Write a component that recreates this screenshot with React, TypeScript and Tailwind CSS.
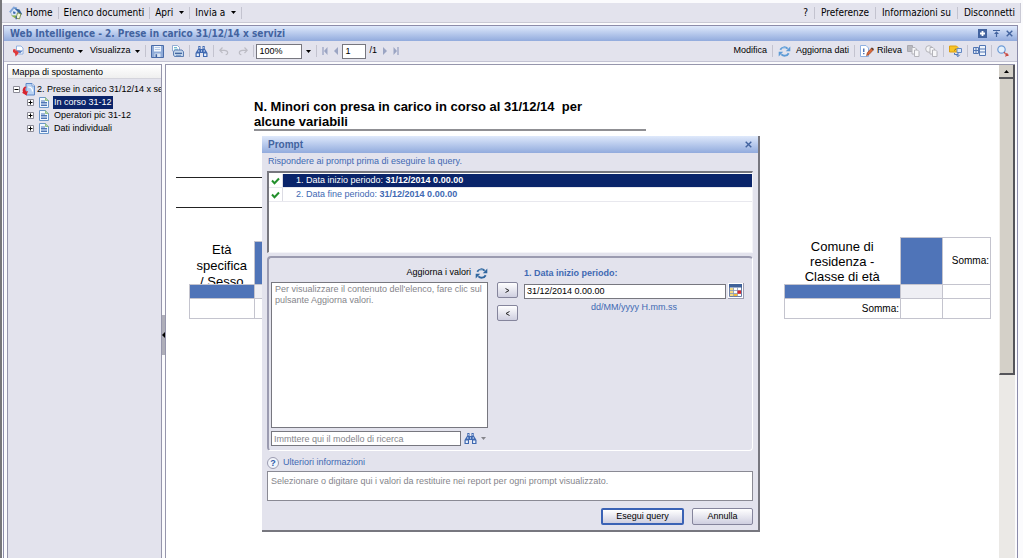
import React from 'react';
import clsx from 'clsx';

type IconProps = { className?: string };

const Separator = () => <span className="h-3 w-px shrink-0 bg-[#c3c3cf]" />;

const Caret = ({ className }: IconProps) => (
  <svg viewBox="0 0 5 3" className={clsx('h-[3px] w-[5px] shrink-0', className)} aria-hidden="true">
    <path d="M0 0h5L2.5 3z" fill="currentColor" />
  </svg>
);

const HomeIcon = () => (
  <svg viewBox="0 0 14 14" className="size-3.5 shrink-0" aria-hidden="true">
    <path d="M1.5 6 5 2l4 2v6.500L3 9.500z" fill="#dfe9f7" stroke="#9db3d3" strokeWidth=".7" />
    <path d="M.8 6.4 4.800 1.500l3.200.8" fill="none" stroke="#7fa5da" strokeWidth="1.8" />
    <path d="M5 2.2 10.5 3.600l2.700 4.700-2 .2L8 5z" fill="#35659f" />
    <path d="m4.2 5.3 2.400.6-.4 2L4 7.400z" fill="#3d6cb4" />
    <path d="m8.500 6.800 3.500 1-1.500 5L7 12.200z" fill="#f1f6dd" stroke="#54701f" strokeWidth=".7" />
    <path d="m2 9.500 4.500 3 1-3z" fill="#8fb94a" />
    <path d="M7.2 10.2v3" stroke="#385ca0" strokeWidth="1.2" />
  </svg>
);

const DocIcon = () => (
  <svg viewBox="0 0 12 12" className="size-3 shrink-0" aria-hidden="true">
    <path d="M4.500 1H9l2 2v6H4.500z" fill="#fff" stroke="#7fa3dc" strokeWidth=".8" />
    <path d="M1 4.500 3.500 4v1.500h4.300L6 9l-2.500 2.500L3 8.600 1 7z" fill="#e0393b" />
    <path d="M4.500 5.500H11L8 8.500z" fill="#5b83c8" />
  </svg>
);

const SaveIcon = () => (
  <svg viewBox="0 0 13 13" className="size-[13px]" aria-hidden="true">
    <path d="M.5.5h12v12H.5z" fill="#8fabd8" stroke="#4a6ca8" />
    <path d="M3 1h7v5.500H3z" fill="#f2f7fd" />
    <path d="M3.800 2.500h5.400M3.800 4.500h5.400" stroke="#a4bce0" strokeWidth=".8" />
    <path d="M3.500 8.500h6V12h-6z" fill="#dbe5f3" />
    <path d="M4.500 9.200h1.600V12H4.500z" fill="#3d609f" />
  </svg>
);

const PrintIcon = () => (
  <svg viewBox="0 0 13 13" className="size-[13px]" aria-hidden="true">
    <path d="M1.500.500h5L8.500 2.500V6h-7z" fill="#fff" stroke="#7b9ac9" strokeWidth=".8" />
    <path d="M3 2.500h3M3 4.200h4" stroke="#5fb3c9" strokeWidth=".9" />
    <path d="M2.500 6.500 4.500 5h6.500l1.500 1.800v4.700h-9l-1-1.500z" fill="#c3d6ec" stroke="#4e73ac" strokeWidth=".9" />
    <path d="M4 8.300h7" stroke="#355b98" strokeWidth="1.200" />
    <path d="M5 10.300h5" stroke="#6f92c2" />
  </svg>
);

const BinocularsIcon = () => (
  <svg viewBox="0 0 13 13" className="size-[13px]" aria-hidden="true">
    <path d="M3.300 1h2.200v3h2V1h2.200v2.500L12.500 8v4H8V8H5v4H.500V8l2.800-4.500z" fill="#3f68b0" />
    <path d="M1.700 8.500h2.200v2.400H1.700zM9.100 8.500h2.200v2.400H9.100z" fill="#eaf2fc" />
    <path d="M4.400 2v1.500M8.600 2v1.500M3.800 5v2M9.200 5v2" stroke="#c3d5f0" strokeWidth=".9" />
    <path d="M6 5.300h1v1.400H6z" fill="#c3d5f0" />
  </svg>
);

const UndoIcon = ({ className }: IconProps) => (
  <svg viewBox="0 0 10 10" className={clsx('size-2.5', className)} aria-hidden="true">
    <path d="M3.500 1.500.8 4.300 3.500 7M1 4.300h4.500c4 0 4 4.200 1.200 4.400" fill="none" stroke="#bcbcc4" strokeWidth="1.200" />
  </svg>
);

const PageArrow = ({ end, flip }: { end?: boolean; flip?: boolean }) => (
  <svg viewBox="0 0 6 8" className={clsx('h-2 w-1.5', flip && 'rotate-180')} aria-hidden="true">
    <path d={end ? 'M.5 0 4 4 .5 8z' : 'M1 0l4 4-4 4z'} fill="#9ba5c3" />
    {end && <path d="M5 0v8" stroke="#9ba5c3" strokeWidth="1.3" />}
  </svg>
);

const RefreshIcon = ({ dark }: { dark?: boolean }) => {
  const color = dark ? '#2f669f' : '#5d9bd6';
  return (
    <svg viewBox="0 0 13 13" className="size-[13px] shrink-0" aria-hidden="true">
      <path d="M2.3 4.800C4 1.700 7.500 1.700 9.700 3.600M10.700 8.200C9 11.300 5.500 11.300 3.300 9.400" fill="none" stroke={color} strokeWidth="1.9" />
      <path d="M12.300 1.500v4.700H7.800zM.7 11.500V6.800h4.500z" fill={color} />
      <path d="M3.500 4.300c1.300-1.600 3-1.800 4.500-1" fill="none" stroke="#c8dff3" strokeWidth=".6" />
    </svg>
  );
};

const TrackIcon = () => (
  <svg viewBox="0 0 14 12" className="h-3 w-3.5 shrink-0" aria-hidden="true">
    <path d="M.5.5H6L8.500 3v8.500h-8z" fill="#fff" stroke="#8fb1e2" />
    <path d="M3.800 3.500v3.500M3.800 8v1.300" stroke="#2c56a3" strokeWidth="1.2" />
    <path d="m6.500 10.800.7-3L11.500 3l2 1.800-4.400 4.700z" fill="#d9683a" stroke="#7e3015" strokeWidth=".5" />
    <path d="m11 3.600 1-1.200 2 1.700-1 1.200z" fill="#5b3a2a" />
  </svg>
);

const CopiesIcon = ({ round }: { round?: boolean }) => (
  <svg viewBox="0 0 13 12" className="h-3 w-[13px]" aria-hidden="true">
    {round ? <circle cx="4" cy="4" r="3.3" fill="#f4f4f6" stroke="#b4b4ba" /> : <path d="M.5.5h5v6h-5z" fill="#b9b9bf" stroke="#a8a8b0" />}
    <path d="M5 2.500h3L9.500 4v5H5z" fill="#f7f7f9" stroke="#b4b4ba" />
    <path d="M7.500 5h3L12 6.500v5H7.500z" fill="#f7f7f9" stroke="#b4b4ba" />
  </svg>
);

const DrillIcon = () => (
  <svg viewBox="0 0 13 12" className="h-3 w-[13px]" aria-hidden="true">
    <path d="M.5 1h7L9 2.500V7H.5z" fill="#f7c325" stroke="#dda012" />
    <path d="M5.500 5.500 7 3.500" stroke="#8e6810" />
    <path d="M8 3.500h4.500v4H8z" fill="#dce9fa" stroke="#6488c3" />
    <path d="M5.500 8v1.500H9M9 7.500v4M7.200 9.800 9 11.600l1.800-1.800" fill="none" stroke="#4f78b9" />
  </svg>
);

const StructureIcon = () => (
  <svg viewBox="0 0 13 12" className="h-3 w-[13px]" aria-hidden="true">
    <path d="M6.500.5h6v10h-6zM6.500 4h6M6.500 7h6" fill="#eef4fc" stroke="#5276b3" />
    <path d="M.5 2.500h5v6h-5zM.5 5.500h5M3 2.500v6" fill="#dbe6f6" stroke="#5276b3" />
  </svg>
);

const MagnifierIcon = () => (
  <svg viewBox="0 0 12 12" className="size-3" aria-hidden="true">
    <circle cx="4.500" cy="4.500" r="3.700" fill="#e5f1fc" stroke="#6d9bd6" strokeWidth="1.2" />
    <path d="m7.200 7 1.500 2.500M9 8.500l2.500 2M8.500 11.500l2-3" stroke="#c94a43" strokeWidth="1.2" />
  </svg>
);

const ReportIcon = () => (
  <svg viewBox="0 0 13 13" className="size-[13px] shrink-0" aria-hidden="true">
    <path d="M4 .5h6L12.500 3v9H4z" fill="#b9d2f2" stroke="#5d88c8" />
    <path d="M10 .5V3h2.500" fill="#fff" stroke="#5d88c8" strokeWidth=".7" />
    <path d="M3 3.500C1 4.500 0 7 1 9l-1 .8 4.500 2.700L6 8l-1.800.5C3 7 3 5 4.500 4z" fill="#d8232e" />
    <path d="M6 4c3 0 4.500 1.500 4.500 4.500" stroke="#fff" strokeWidth="1.2" fill="none" />
  </svg>
);

const PageIcon = () => (
  <svg viewBox="0 0 10 11" className="h-[11px] w-2.5 shrink-0" aria-hidden="true">
    <path d="M.5.5h6l3 3v7h-9z" fill="#f1f8ff" stroke="#6a96c9" />
    <path d="M6.500.5v3h3" fill="#bddc9b" stroke="#7aae67" strokeWidth=".7" />
    <path d="M2 4h4M2 5.500h6M2 7h6M2 8.500h6" stroke="#3b67ae" strokeWidth=".9" />
  </svg>
);

const ToggleBox = ({ open }: { open?: boolean }) => (
  <svg viewBox="0 0 7 7" className="size-[7px] shrink-0" aria-hidden="true">
    <path d="M.5.5h6v6h-6z" fill="#fff" stroke="#8b8b96" />
    <path d={open ? 'M1.500 3.500h4' : 'M1.500 3.500h4M3.500 1.500v4'} stroke="#000" />
  </svg>
);

const CheckIcon = () => (
  <svg viewBox="0 0 9 8" className="h-2 w-[9px]" aria-hidden="true">
    <path d="m1 3.500 2.500 2.700L8 1.500" fill="none" stroke="#23902c" strokeWidth="2" />
  </svg>
);

const CloseIcon = () => (
  <svg viewBox="0 0 7 7" className="size-[7px]" aria-hidden="true">
    <path d="m.7.7 5.600 5.600M6.300.7.7 6.300" stroke="#42639f" strokeWidth="1.4" />
  </svg>
);

const CalendarIcon = () => (
  <svg viewBox="0 0 13 13" className="size-[13px]" aria-hidden="true">
    <path d="M.5.5h12v12H.5z" fill="#fff" stroke="#6b7fa6" />
    <path d="M0 0h13v3.500H0z" fill="#3f6199" />
    <path d="M1 4h3.500v8H1z" fill="#f3d983" />
    <path d="M4.500 3.500v9M8.500 3.500v9M1 6.500h11M1 9.500h11" stroke="#8798b8" strokeWidth=".8" />
    <path d="M8.500 6.500H12v3.200H8.500z" fill="#d9252b" />
    <path d="M4.800 10h3.500v2H4.800z" fill="#f0b63d" />
  </svg>
);

const topLinks = ['?', 'Preferenze', 'Informazioni su', 'Disconnetti'];
const reports = ['In corso 31-12', 'Operatori pic 31-12', 'Dati individuali'];
const prompts = [
  { label: '1. Data inizio periodo:', value: '31/12/2014 0.00.00' },
  { label: '2. Data fine periodo:', value: '31/12/2014 0.00.00' },
];

const TopBar = () => (
  <header className="mt-[3px] mr-0.5 flex h-5 items-center justify-between border-r border-b border-[#c9c9d4] bg-[#e3e3ed] pr-1 pl-[7px] text-[10px]">
    <nav className="flex items-center gap-[5px]">
      <a href="#home" className="flex items-center gap-[3px]">
        <HomeIcon />
        Home
      </a>
      <Separator />
      <a href="#list">Elenco documenti</a>
      <Separator />
      <button type="button" className="flex items-center gap-1.5">
        Apri <Caret />
      </button>
      <Separator />
      <button type="button" className="flex items-center gap-1.5">
        Invia a <Caret />
      </button>
      <Separator />
    </nav>
    <nav className="flex items-center gap-[5px]">
      {topLinks.map((link, i) => (
        <React.Fragment key={link}>
          {i > 0 && <Separator />}
          <a href="#top" className="px-px">{link}</a>
        </React.Fragment>
      ))}
    </nav>
  </header>
);

const Toolbar = () => (
  <div className="flex h-[21px] items-center justify-between border-b border-[#c3c3d3] bg-[#e3e3ed] pr-2 pl-2">
    <div className="flex items-center gap-[5px]">
      <button type="button" className="flex items-center gap-1">
        <DocIcon />
        Documento
        <Caret />
      </button>
      <button type="button" className="ml-0.5 flex items-center gap-[5px]">
        Visualizza <Caret />
      </button>
      <Separator />
      <button type="button" aria-label="Salva"><SaveIcon /></button>
      <button type="button" aria-label="Stampa" className="ml-0.5"><PrintIcon /></button>
      <Separator />
      <button type="button" aria-label="Trova"><BinocularsIcon /></button>
      <Separator />
      <button type="button" aria-label="Annulla modifica"><UndoIcon /></button>
      <button type="button" aria-label="Ripeti modifica" className="ml-1"><UndoIcon className="-scale-x-100" /></button>
      <div className="flex items-center gap-0.5">
        <Separator />
        <input aria-label="Zoom" defaultValue="100%" className="h-[15px] w-[46px] border border-[#77777f] bg-white pl-0.5" />
        <button type="button" aria-label="Scegli zoom" className="ml-0.5"><Caret /></button>
      </div>
      <Separator />
      <button type="button" aria-label="Prima pagina"><PageArrow end flip /></button>
      <div className="flex items-center gap-[3px]">
        <button type="button" aria-label="Pagina precedente"><PageArrow flip /></button>
        <input aria-label="Pagina" defaultValue="1" className="h-[15px] w-6 border border-[#77777f] bg-white pl-0.5" />
        <span>/1</span>
      </div>
      <button type="button" aria-label="Pagina successiva"><PageArrow /></button>
      <button type="button" aria-label="Ultima pagina"><PageArrow end /></button>
    </div>
    <div className="flex items-center gap-[5px]">
      <button type="button">Modifica</button>
      <Separator />
      <button type="button" className="flex items-center gap-[5px]">
        <RefreshIcon />
        Aggiorna dati
      </button>
      <Separator />
      <button type="button" className="flex items-center gap-[3px]">
        <TrackIcon />
        Rileva
      </button>
      <button type="button" aria-label="Mostra modifiche"><CopiesIcon /></button>
      <button type="button" aria-label="Nascondi modifiche"><CopiesIcon round /></button>
      <Separator />
      <button type="button" aria-label="Drill"><DrillIcon /></button>
      <Separator />
      <button type="button" aria-label="Struttura"><StructureIcon /></button>
      <Separator />
      <button type="button" aria-label="Cerca"><MagnifierIcon /></button>
    </div>
  </div>
);

const Sidebar = () => (
  <aside className="w-[155px] shrink-0 overflow-hidden border border-b-0 border-[#9696ac] bg-[#e3e3ed]">
    <h2 className="h-[14px] border-b border-[#d4d4dc] bg-linear-to-b from-white to-[#efefef] pl-1 leading-[14px]">Mappa di spostamento</h2>
    <ul className="pt-1 leading-[13px]">
      <li>
        <button type="button" className="flex items-center gap-0.5 pl-[5px] whitespace-nowrap">
          <ToggleBox open />
          <ReportIcon />
          2. Prese in carico 31/12/14 x se
        </button>
        <ul>
          {reports.map((name, i) => (
            <li key={name}>
              <button type="button" className="flex items-center gap-[5px] pl-[19px]">
                <ToggleBox />
                <PageIcon />
                <span className={clsx('-ml-px px-px', i === 0 && 'bg-[#0a246a] text-white')}>{name}</span>
              </button>
            </li>
          ))}
        </ul>
      </li>
    </ul>
  </aside>
);

const Report = () => (
  <main className="min-w-0 grow overflow-hidden bg-white">
    <h1 className="mt-[34px] ml-[88px] w-[392px] border-b-2 border-[#8f8f93] text-[13px] leading-[15px] font-bold whitespace-pre-wrap">
      {'N. Minori con presa in carico in corso al 31/12/14  per\nalcune variabili'}
    </h1>
    <div className="mt-[46px] ml-2.5 h-[31px] w-[470px] border-y border-[#222]" />
    <div className="mt-[29px] flex items-end justify-between pr-2 pl-[23px]">
      <table className="border-collapse text-center text-[13px] leading-4">
        <tbody>
          <tr>
            <th className="w-[65px] p-0 font-normal">
              <div className="h-[42px] overflow-hidden">Età<br />specifica<br />/ Sesso</div>
            </th>
            <td className="w-[42px] border border-[#c4c4ce] bg-[#4f74b8]" />
          </tr>
          <tr className="h-[14px]">
            <td className="border border-[#c4c4ce] bg-[#4f74b8]" />
            <td className="border border-[#c4c4ce] bg-[#efeff4]" />
          </tr>
          <tr className="h-5">
            <td className="border border-[#c4c4ce]" />
            <td className="border border-[#c4c4ce]" />
          </tr>
        </tbody>
      </table>
      <table className="border-collapse text-[10px]">
        <tbody>
          <tr>
            <th className="w-[116px] p-0 text-center text-[13px] leading-[15px] font-normal">
              <div className="pt-px">Comune di<br />residenza -<br />Classe di età</div>
            </th>
            <td className="w-[42px] border border-[#c4c4ce] bg-[#4f74b8]" />
            <th className="w-12 border border-[#c4c4ce] p-0 pr-px text-right font-normal">Somma:</th>
          </tr>
          <tr className="h-[14px]">
            <td className="border border-[#c4c4ce] bg-[#4f74b8]" />
            <td className="border border-[#c4c4ce] bg-[#efeff4]" />
            <td className="border border-[#c4c4ce]" />
          </tr>
          <tr className="h-5">
            <th className="border border-[#c4c4ce] p-0 pr-px text-right font-normal">Somma:</th>
            <td className="border border-[#c4c4ce]" />
            <td className="border border-[#c4c4ce]" />
          </tr>
        </tbody>
      </table>
    </div>
  </main>
);

const ScrollBar = () => (
  <div className="flex w-4 shrink-0 flex-col bg-[#ebe9e6]">
    <button type="button" aria-label="Scorri in alto" className="flex h-[14px] items-center justify-center border-r-2 border-b-2 border-[#55555a] bg-[#d4d0c8]">
      <Caret className="rotate-180" />
    </button>
    <div className="h-[296px] border-r-2 border-b-2 border-l border-[#55555a] border-l-[#f4f2ee] bg-[#d4d0c8]" />
  </div>
);

const PromptDialog = () => (
  <section
    role="dialog"
    aria-labelledby="prompt-title"
    className="absolute top-[136px] left-[260px] w-[498px] border-r-2 border-b-2 border-[#77777f] bg-[#e3e3ed] pb-[5px]"
  >
    <div className="flex h-[17px] items-center justify-between bg-linear-to-b from-[#dfe9fb] to-[#92abdd] pr-1.5 pl-1.5">
      <h2 id="prompt-title" className="text-[10px] font-bold text-[#42639f]">Prompt</h2>
      <button type="button" aria-label="Chiudi"><CloseIcon /></button>
    </div>
    <div className="px-[5px]">
      <p className="flex h-[18px] items-center pl-px text-[#4169b3]">Rispondere ai prompt prima di eseguire la query.</p>
      <ul className="h-[82px] border-t-2 border-r border-b border-l-2 border-[#77777f] border-r-[#f4f4f8] border-b-[#f4f4f8] bg-white pt-px">
        {prompts.map((prompt, i) => (
          <li key={prompt.label} className="flex h-[14px] border-b border-[#e8e8ee]">
            <span className="flex w-[14px] items-center justify-center border-r border-[#dcdce4]"><CheckIcon /></span>
            <button
              type="button"
              className={clsx('grow pl-[13px] text-left whitespace-pre', i === 0 ? 'bg-[#0a246a] text-white' : 'text-[#4169b3]')}
            >
              {prompt.label} <b>{prompt.value}</b>
            </button>
          </li>
        ))}
      </ul>
      <div className="mt-[3px] flex h-[195px] rounded-sm border-t-2 border-r border-b border-l-2 border-[#9b9bb0] border-r-white border-b-white pt-[7px] pl-0.5">
        <div className="w-[217px]">
          <button type="button" className="ml-auto flex h-4 items-center gap-1">
            Aggiorna i valori
            <RefreshIcon dark />
          </button>
          <div className="mt-px h-[146px] border border-[#77777f] bg-white px-[3px] pt-px leading-[11px] text-[#85858b]">
            Per visualizzare il contenuto dell'elenco, fare clic sul pulsante Aggiorna valori.
          </div>
          <div className="mt-[3px] flex items-center gap-[3px]">
            <input
              aria-label="Modello di ricerca"
              placeholder="Immttere qui il modello di ricerca"
              className="h-[15px] w-[190px] border border-[#77777f] bg-white pl-0.5 placeholder:text-[#85858b]"
            />
            <button type="button" aria-label="Cerca valori" className="flex items-center gap-1 text-[#85858b]">
              <BinocularsIcon />
              <Caret />
            </button>
          </div>
        </div>
        <div className="ml-[9px] flex flex-col gap-[7px] pt-[17px]">
          <button type="button" aria-label="Aggiungi" className="flex h-4 w-[21px] items-center justify-center rounded-xs border border-[#85859c] bg-linear-to-b from-white to-[#cfcfe0]">
            <svg viewBox="0 0 5 5" className="size-[5px]"><path d="m.5.5 3.500 2-3.500 2" fill="none" stroke="#222" /></svg>
          </button>
          <button type="button" aria-label="Rimuovi" className="flex h-4 w-[21px] items-center justify-center rounded-xs border border-[#85859c] bg-linear-to-b from-white to-[#cfcfe0]">
            <svg viewBox="0 0 5 5" className="size-[5px] rotate-180"><path d="m.5.5 3.500 2-3.500 2" fill="none" stroke="#222" /></svg>
          </button>
        </div>
        <div className="ml-1.5 w-[220px] text-[#4169b3]">
          <label htmlFor="start" className="flex h-[18px] items-center font-bold">1. Data inizio periodo:</label>
          <div className="flex items-center gap-0.5">
            <input id="start" defaultValue="31/12/2014 0.00.00" className="h-[15px] min-w-0 grow border border-[#77777f] bg-white pl-0.5 text-black" />
            <button type="button" aria-label="Calendario" className="border-r border-b border-[#9b9bb0] bg-white p-px"><CalendarIcon /></button>
          </div>
          <p className="mt-[3px] text-center leading-[10px]">dd/MM/yyyy H.mm.ss</p>
        </div>
      </div>
      <div className="mt-1 flex h-4 items-center gap-1 text-[#4169b3]">
        <span className="flex size-3 items-center justify-center rounded-full border border-[#9b9bb0] bg-[#f2f5fb] text-[9px] leading-none font-bold text-[#2f5ba8]">?</span>
        <a href="#info">Ulteriori informazioni</a>
      </div>
      <div className="h-[30px] border border-[#8a8a94] bg-white px-[3px] pt-1 leading-[11px] text-[#85858b]">
        Selezionare o digitare qui i valori da restituire nei report per ogni prompt visualizzato.
      </div>
      <div className="mt-[7px] flex justify-end gap-2">
        <button type="button" className="h-[17px] w-[83px] rounded-xs border-2 border-[#3a62b5] bg-linear-to-b from-white to-[#cfcfe0] leading-none">Esegui query</button>
        <button type="button" className="h-[17px] w-[61px] rounded-xs border border-[#85859c] bg-linear-to-b from-white to-[#cfcfe0] leading-none">Annulla</button>
      </div>
    </div>
  </section>
);

const App = () => (
  <div className="relative flex h-screen flex-col overflow-hidden border-l-2 border-[#77777a] bg-[#fbfbfd] font-['DejaVu_Sans_Condensed','DejaVu_Sans',sans-serif] text-[9px] text-black">
    <TopBar />
    <div className="mt-0.5 mr-[5px] ml-px flex min-h-0 grow flex-col border border-b-0 border-[#8c8caa]">
      <div className="flex h-[15px] shrink-0 items-center justify-between bg-linear-to-b from-[#dfe9fb] to-[#92abdd] pr-1 pl-1.5">
        <h1 className="text-[10px] font-bold text-[#42639f]">Web Intelligence - 2. Prese in carico 31/12/14 x servizi</h1>
        <div className="flex items-center gap-1.5">
          <button type="button" aria-label="Aggiungi">
            <svg viewBox="0 0 9 9" className="size-[9px]"><path d="M0 0h9v9H0z" fill="#42639f" /><path d="M4.500 2v5M2 4.500h5" stroke="#fff" strokeWidth="1.8" /></svg>
          </button>
          <button type="button" aria-label="Ingrandisci">
            <svg viewBox="0 0 7 7" className="size-[7px]"><path d="M0 .5h7M3.500 7V3" stroke="#42639f" strokeWidth="1.2" /><path d="M3.500 1.300 6 4H1z" fill="#42639f" /></svg>
          </button>
          <button type="button" aria-label="Chiudi"><CloseIcon /></button>
        </div>
      </div>
      <div className="flex min-h-0 grow flex-col font-['Liberation_Sans',sans-serif]">
        <Toolbar />
        <div className="mt-0.5 mr-0.5 ml-[3px] flex min-h-0 grow">
          <Sidebar />
          <button type="button" aria-label="Chiudi pannello" className="flex w-[3px] shrink-0 flex-col pt-[251px]">
            <span className="flex h-10 w-[3px] items-center bg-[#aeaeb9]">
              <svg viewBox="0 0 3 6" className="h-1.5 w-[3px]"><path d="M3 0v6L0 3z" fill="#000" /></svg>
            </span>
          </button>
          <div className="flex min-w-0 grow border border-r-0 border-b-0 border-[#9696ac]">
            <Report />
            <ScrollBar />
          </div>
        </div>
      </div>
    </div>
    <div className="font-['Liberation_Sans',sans-serif]">
      <PromptDialog />
    </div>
  </div>
);

export default App;
